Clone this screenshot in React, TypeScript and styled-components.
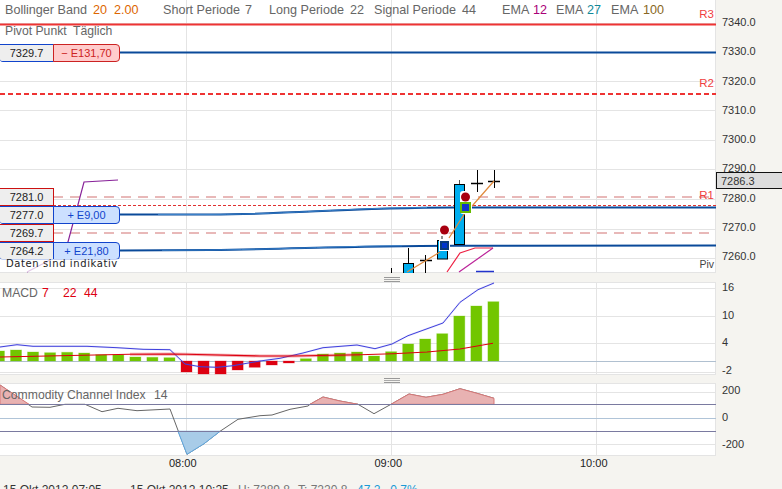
import styled, { createGlobalStyle } from 'styled-components';

const GlobalStyle = createGlobalStyle`
    html, body {
        margin: 0;
        padding: 0;
        background: #f5f4f0;
        overflow: hidden;
    }
`

const Page = styled.div`
    width: 782px;
    height: 489px;
    overflow: hidden;
    display: flex;
    flex-direction: column;
    background: #f5f4f0;
    font-family: "Liberation Sans", Arial, sans-serif;
    font-size: 11px;
    color: #333;
`

const PanelRow = styled.div<{ $height: number }>`
    display: flex;
    height: ${(p) => p.$height}px;
    flex: none;
`

const Plot = styled.div`
    position: relative;
    width: 716px;
    flex: none;
    background: #fff;

    svg {
        display: block;
    }
`

const Axis = styled.div<{ $top: number; $step: number }>`
    flex: 1;
    margin-top: ${(p) => p.$top}px;
    padding-left: 6px;
    display: grid;
    grid-auto-rows: ${(p) => p.$step}px;
    position: relative;
`

const Tick = styled.div`
    line-height: 14px;
    height: 14px;
    color: #333;
`

const CurrentPrice = styled.div`
    position: absolute;
    left: 0;
    right: 0;
    top: 157px;
    height: 17px;
    line-height: 16px;
    padding-left: 4px;
    box-sizing: border-box;
    background: #dddddd;
    border: 1px solid #111;
    border-right: none;
`

const Divider = styled.div<{ $height: number }>`
    height: ${(p) => p.$height}px;
    flex: none;
    width: 716px;
    display: flex;
    justify-content: center;
    align-items: flex-end;
    padding-left: 68px;
    box-sizing: border-box;
`

const Grip = styled.div`
    width: 16px;
    height: 3px;
    border-top: 1px solid #999;
    border-bottom: 1px solid #999;
    position: relative;

    &::after {
        content: '';
        position: absolute;
        left: 0;
        right: 0;
        top: 1px;
        height: 1px;
        background: #aaa;
    }
`

const Legend = styled.div`
    position: absolute;
    left: 5px;
    top: 2px;
    display: flex;
    font-size: 12.6px;
    line-height: 16px;
    white-space: nowrap;
    color: #666;
`

const LegendItem = styled.span<{ $width: number }>`
    width: ${(p) => p.$width}px;
    flex: none;
`

const LegendValue = styled.span<{ $color: string; $width?: number }>`
    color: ${(p) => p.$color};
    ${(p) => (p.$width ? `width: ${p.$width}px; flex: none;` : '')}
`

const PanelTitle = styled.div<{ $top: number; $left?: number }>`
    position: absolute;
    left: ${(p) => p.$left ?? 2}px;
    top: ${(p) => p.$top}px;
    display: flex;
    font-size: 12.2px;
    line-height: 16px;
    color: #666;
    white-space: pre;
`

const TitleValue = styled.span<{ $width: number; $color?: string }>`
    width: ${(p) => p.$width}px;
    flex: none;
    color: ${(p) => p.$color ?? 'inherit'};
`

const LevelName = styled.div<{ $top: number }>`
    position: absolute;
    right: 2px;
    top: ${(p) => p.$top}px;
    font-size: 11.5px;
    line-height: 14px;
    color: #f04040;
`

const PriceTag = styled.div<{ $top: number }>`
    position: absolute;
    left: 0;
    top: ${(p) => p.$top}px;
    height: 18px;
    display: flex;
`

const PriceCell = styled.div<{ $tone: 'blue' | 'red' }>`
    width: 54px;
    box-sizing: border-box;
    height: 100%;
    background: #eeeeee;
    border: 1px solid ${(p) => (p.$tone === 'blue' ? '#1144cc' : '#cc1111')};
    border-left: none;
    border-radius: ${(p) => (p.$tone === 'blue' ? '0 0 0 3px' : '0')};
    text-align: center;
    line-height: 16px;
    color: #222;
`

const AmountCell = styled.div<{ $tone: 'gain' | 'loss' }>`
    width: 67px;
    box-sizing: border-box;
    height: 100%;
    margin-left: -1px;
    background: ${(p) => (p.$tone === 'gain' ? '#cce0ff' : '#ffcccc')};
    border: 1px solid ${(p) => (p.$tone === 'gain' ? '#1144cc' : '#cc2222')};
    border-radius: 0 4px 4px 0;
    color: ${(p) => (p.$tone === 'gain' ? '#1144cc' : '#cc2222')};
    text-align: center;
    line-height: 16px;
`

const Notice = styled.div`
    position: absolute;
    left: 0;
    top: 259px;
    height: 13px;
    padding-left: 6px;
    width: 122px;
    box-sizing: border-box;
    background: rgba(255, 255, 255, 0.75);
    font-family: "DejaVu Sans", sans-serif;
    font-size: 10px;
    letter-spacing: 0.6px;
    line-height: 9px;
    color: #222;
`

const PivLabel = styled.div`
    position: absolute;
    right: 2px;
    top: 257px;
    font-size: 10.5px;
    line-height: 14px;
    color: #444;
`

const TimeRow = styled.div`
    display: flex;
    flex: none;
    height: 14px;
    padding-left: 80px;
`

const TimeLabel = styled.div`
    width: 205.5px;
    flex: none;
    text-align: center;
    line-height: 14px;
    color: #222;
`

const Footer = styled.div`
    display: flex;
    flex: none;
    margin-top: 13px;
    padding-left: 3px;
    font-size: 12px;
    line-height: 14px;
    white-space: pre;
    color: #333;
`

const FooterCell = styled.span<{ $width: number; $color?: string }>`
    width: ${(p) => p.$width}px;
    flex: none;
    color: ${(p) => p.$color ?? 'inherit'};
`

const GRID = '#e4e4e4';
const VERTICALS = [186.5, 391.5, 596.5];

const toPoints = (pts: number[][]) => pts.map((p) => p.join(',')).join(' ');

function Grid(props: { top: number; bottom: number; rows: number[] }) {
    return (
        <g stroke={GRID} strokeWidth={1} shapeRendering="crispEdges">
            {props.rows.map((y) => <line key={y} x1={0} x2={716} y1={y} y2={y} />)}
            {VERTICALS.map((x) => <line key={x} x1={x} x2={x} y1={props.top} y2={props.bottom} />)}
            <line x1={715.5} x2={715.5} y1={props.top} y2={props.bottom} />
        </g>
    )
}

function MainChart() {
    return (
        <svg width={716} height={273} viewBox="0 0 716 273">
            <Grid top={0} bottom={273} rows={[23, 81, 110, 140, 169, 199, 229, 258, 272]} />

            <line x1={0} x2={716} y1={24.5} y2={24.5} stroke="#ee3333" strokeWidth={2} />
            <line x1={120} x2={716} y1={52.5} y2={52.5} stroke="#0a4a9a" strokeWidth={2} />
            <line x1={0} x2={716} y1={94} y2={94} stroke="#ee3333" strokeWidth={2} strokeDasharray="5 3" />

            <line x1={53} x2={716} y1={197} y2={197} stroke="#e8b8b8" strokeWidth={2} strokeDasharray="10 7" />
            <line x1={53} x2={716} y1={233} y2={233} stroke="#e8b8b8" strokeWidth={2} strokeDasharray="10 7" />
            <line x1={53} x2={716} y1={205.5} y2={205.5} stroke="#e03030" strokeWidth={1} strokeDasharray="3 2" />

            <path d="M120 214.5 L210 214.5 C300 214 340 208 455 207.5 L716 207.5" fill="none" stroke="#0a4a9a" strokeWidth={2} />
            <path d="M158 214.5 L210 214.5 C300 214 340 208 427 207.6" fill="none" stroke="#3a80c8" strokeWidth={1} />
            <path d="M120 250.5 L210 250 C300 249 340 246 455 245.7 L716 245.5" fill="none" stroke="#0a4a9a" strokeWidth={2} />
            <path d="M162 250.3 L210 250 C300 249 340 246 402 245.8" fill="none" stroke="#3a80c8" strokeWidth={1} />

            <polyline points="27,272 50,260 68,242 84,182 118,180" fill="none" stroke="#882299" strokeWidth={1.2} />

            <polyline points="447,272 460,253 475,248 493,248" fill="none" stroke="#ee2244" strokeWidth={1.2} />
            <polyline points="459,272 493,248" fill="none" stroke="#bb2299" strokeWidth={1.2} />
            <line x1={476} x2={494} y1={271.5} y2={271.5} stroke="#2233cc" strokeWidth={1.5} />

            <line x1={391.5} x2={391.5} y1={268} y2={273} stroke="#000" />
            <line x1={408.5} x2={408.5} y1={248} y2={263} stroke="#000" />
            <rect x={403.5} y={263.5} width={10} height={10} fill="#00aeef" stroke="#000" />
            <line x1={425.5} x2={425.5} y1={255} y2={273} stroke="#000" />
            <line x1={420} x2={432} y1={260.5} y2={260.5} stroke="#000" strokeWidth={1.5} />
            <rect x={437.5} y={240.5} width={10} height={18.5} fill="#00aeef" stroke="#000" />
            <line x1={459.5} x2={459.5} y1={180} y2={184} stroke="#555" />
            <rect x={454.5} y={184.5} width={10} height={60} fill="#00aeef" stroke="#000" />
            <line x1={477.5} x2={477.5} y1={170} y2={192} stroke="#000" />
            <line x1={471} x2={483} y1={183.5} y2={183.5} stroke="#000" strokeWidth={1.5} />
            <line x1={494.5} x2={494.5} y1={170} y2={188} stroke="#000" />
            <line x1={488} x2={500} y1={181.5} y2={181.5} stroke="#000" strokeWidth={1.5} />

            <polyline points="407,272 440,252" fill="none" stroke="#e08a3c" strokeWidth={1.2} />
            <polyline points="449,238 465,213 473,205 494,181" fill="none" stroke="#e08a3c" strokeWidth={1.2} />

            <rect x={460} y={191} width={12} height={23} rx={3} fill="#fff" />
            <circle cx={465.5} cy={197} r={4.5} fill="#a80010" />
            <rect x={461} y={203} width={9} height={9} fill="#1133cc" stroke="#66bb00" strokeWidth={2} />
            <rect x={439} y={224} width={11} height={11} rx={5} fill="#fff" />
            <circle cx={444.5} cy={230} r={4.5} fill="#a80010" />
            <line x1={442} x2={442} y1={236} y2={239} stroke="#222" />
            <rect x={439} y={240} width={11} height={11} fill="#fff" />
            <rect x={441} y={242} width={7} height={7} fill="#0033cc" stroke="#0a3a7a" strokeWidth={2} />
        </svg>
    )
}

const BAR_EDGES = [
    351, 350, 352, 352.7, 352.3, 353, 354.7, 354.7, 357, 357.3, 357.7,
    372, 374, 374, 370, 367.3, 365, 363,
    358.7, 354, 353, 352, 356, 351.7, 344, 339, 333.7, 316, 306, 301.7,
];
const ZERO_Y = 361;

const MACD_LINE = [
    [0, 347], [17, 344.7], [33, 346.3], [87, 346.3], [117, 347.7], [143, 349.3], [170, 349.7],
    [185, 364], [200, 366.7], [217, 367.3], [233, 365.7], [260, 361], [280, 358.3], [303, 353],
    [323, 347.7], [357, 345], [375, 348.7], [392, 344], [408, 335.7], [443, 323], [460, 302.3],
    [478, 289.7], [494, 283],
];
const SIGNAL_LINE = [
    [0, 357], [130, 354.3], [170, 354], [186, 354.3], [260, 356], [293, 356], [360, 354.7], [393, 353.7],
    [427, 352], [460, 349], [493, 343.3],
];

function MacdChart() {
    return (
        <svg width={716} height={93} viewBox="0 282 716 93">
            <Grid top={282} bottom={375} rows={[282.5, 288, 316, 343, 372, 374]} />
            <line x1={0} x2={716} y1={361} y2={361} stroke="#b0c0d0" shapeRendering="crispEdges" />
            {BAR_EDGES.map((edge, i) => {
                const up = edge < ZERO_Y;
                return (
                    <rect
                        key={i}
                        x={10.5 + 17.05 * (i - 1)}
                        y={up ? edge : ZERO_Y}
                        width={11}
                        height={Math.abs(edge - ZERO_Y)}
                        fill={up ? '#72c600' : '#dd0011'}
                        stroke={up ? 'rgba(114,198,0,0.3)' : 'rgba(221,0,17,0.3)'}
                        strokeWidth={1}
                    />
                )
            })}
            <polyline points={toPoints(MACD_LINE)} fill="none" stroke="rgba(64,64,221,0.12)" strokeWidth={2} />
            <polyline points={toPoints(MACD_LINE)} fill="none" stroke="#4040dd" strokeWidth={1} />
            <polyline points={toPoints(SIGNAL_LINE.slice(1, 7))} fill="none" stroke="rgba(221,30,40,0.35)" strokeWidth={3} />
            <polyline points={toPoints(SIGNAL_LINE)} fill="none" stroke="#dd0011" strokeWidth={1.1} />
        </svg>
    )
}

const CCI_LINE = [
    [0, 385], [32, 407], [50, 407.3], [65, 404.3], [85, 404.3], [102, 411.7], [118, 408.3],
    [137, 410.7], [170, 409], [187, 454.3], [204, 443.7], [220, 431.3], [238, 419.3], [260, 415.7],
    [272, 415], [290, 409.3], [308, 406], [310, 404.3], [323, 397], [340, 401], [358, 404.3],
    [374, 413.7], [391, 404.3], [409, 394], [426, 397.3], [443, 394.3], [460, 388.7], [477, 393.3],
    [494, 398.3],
];

const CCI_UP_AREAS = [
    [[0, 385], [29, 404.3], [0, 404.3]],
    [[310, 404.3], [323, 397], [340, 401], [358, 404.3]],
    [[391, 404.3], [409, 394], [426, 397.3], [443, 394.3], [460, 388.7], [477, 393.3], [494, 398.3], [494, 404.3]],
];
const CCI_DOWN_AREA = [[178, 431.3], [187, 454.3], [204, 443.7], [220, 431.3]];

function CciChart() {
    return (
        <svg width={716} height={73} viewBox="0 383 716 73">
            <Grid top={383} bottom={456} rows={[383.5, 392, 444, 455]} />
            <line x1={0} x2={716} y1={418} y2={418} stroke="#b0c4d8" strokeWidth={1} shapeRendering="crispEdges" />
            <polyline points={toPoints(CCI_LINE)} fill="none" stroke="#666" strokeWidth={1} />
            {CCI_UP_AREAS.map((area, i) => (
                <polygon key={i} points={toPoints(area)} fill="#e8b2b2" stroke="#d87878" strokeWidth={1} />
            ))}
            <polygon points={toPoints(CCI_DOWN_AREA)} fill="#a8cce8" stroke="#60a8e0" strokeWidth={1} />
            <line x1={0} x2={716} y1={404.5} y2={404.5} stroke="#7a7aa0" shapeRendering="crispEdges" />
            <line x1={0} x2={716} y1={431.5} y2={431.5} stroke="#7a7aa0" shapeRendering="crispEdges" />
        </svg>
    )
}

export default function App() {
    return (
        <Page>
            <GlobalStyle />

            <PanelRow $height={273}>
                <Plot>
                    <MainChart />
                    <Legend>
                        <LegendItem $width={88}>Bollinger Band</LegendItem>
                        <LegendValue $color="#dd6600" $width={21}>20</LegendValue>
                        <LegendValue $color="#dd6600" $width={49}>2.00</LegendValue>
                        <LegendItem $width={82}>Short Periode</LegendItem>
                        <LegendValue $color="#666" $width={24}>7</LegendValue>
                        <LegendItem $width={81}>Long Periode</LegendItem>
                        <LegendValue $color="#666" $width={24}>22</LegendValue>
                        <LegendItem $width={88}>Signal Periode</LegendItem>
                        <LegendValue $color="#666" $width={40}>44</LegendValue>
                        <LegendItem $width={31}>EMA</LegendItem>
                        <LegendValue $color="#aa0077" $width={23}>12</LegendValue>
                        <LegendItem $width={31}>EMA</LegendItem>
                        <LegendValue $color="#118899" $width={24}>27</LegendValue>
                        <LegendItem $width={32}>EMA</LegendItem>
                        <LegendValue $color="#886622">100</LegendValue>
                    </Legend>
                    <PanelTitle $top={23} $left={5}>
                        <TitleValue $width={68}>Pivot Punkt</TitleValue>
                        <span>Täglich</span>
                    </PanelTitle>

                    <LevelName $top={7}>R3</LevelName>
                    <LevelName $top={76}>R2</LevelName>
                    <LevelName $top={188}>R1</LevelName>

                    <PriceTag $top={44}>
                        <PriceCell $tone="blue">7329.7</PriceCell>
                        <AmountCell $tone="loss">− E131,70</AmountCell>
                    </PriceTag>
                    <PriceTag $top={188}>
                        <PriceCell $tone="red">7281.0</PriceCell>
                    </PriceTag>
                    <PriceTag $top={206}>
                        <PriceCell $tone="blue">7277.0</PriceCell>
                        <AmountCell $tone="gain">+ E9,00</AmountCell>
                    </PriceTag>
                    <PriceTag $top={224}>
                        <PriceCell $tone="red">7269.7</PriceCell>
                    </PriceTag>
                    <PriceTag $top={242}>
                        <PriceCell $tone="blue">7264.2</PriceCell>
                        <AmountCell $tone="gain">+ E21,80</AmountCell>
                    </PriceTag>

                    <Notice>Daten sind indikativ</Notice>
                    <PivLabel>Piv</PivLabel>
                </Plot>
                <Axis $top={15} $step={29.3}>
                    {['7340.0', '7330.0', '7320.0', '7310.0', '7300.0', '7290.0', '7280.0', '7270.0', '7260.0'].map((t) => (
                        <Tick key={t}>{t}</Tick>
                    ))}
                    <CurrentPrice>7286.3</CurrentPrice>
                </Axis>
            </PanelRow>

            <Divider $height={9}><Grip /></Divider>

            <PanelRow $height={93}>
                <Plot>
                    <MacdChart />
                    <PanelTitle $top={3}>
                        <TitleValue $width={40}>MACD</TitleValue>
                        <TitleValue $width={21} $color="#dd0011">7</TitleValue>
                        <TitleValue $width={21} $color="#dd0011">22</TitleValue>
                        <TitleValue $width={21} $color="#dd0011">44</TitleValue>
                    </PanelTitle>
                </Plot>
                <Axis $top={-2} $step={27.7}>
                    {['16', '10', '4', '-2'].map((t) => <Tick key={t}>{t}</Tick>)}
                </Axis>
            </PanelRow>

            <Divider $height={8}><Grip /></Divider>

            <PanelRow $height={73}>
                <Plot>
                    <CciChart />
                    <PanelTitle $top={4}>
                        <TitleValue $width={152}>Commodity Channel Index</TitleValue>
                        <span>14</span>
                    </PanelTitle>
                </Plot>
                <Axis $top={0} $step={26.8}>
                    {['200', '0', '-200'].map((t) => <Tick key={t}>{t}</Tick>)}
                </Axis>
            </PanelRow>

            <TimeRow>
                <TimeLabel>08:00</TimeLabel>
                <TimeLabel>09:00</TimeLabel>
                <TimeLabel>10:00</TimeLabel>
            </TimeRow>

            <Footer>
                <FooterCell $width={127}>15 Okt 2012 07:05</FooterCell>
                <FooterCell $width={108}>15 Okt 2012 10:25</FooterCell>
                <FooterCell $width={60} $color="#777">H: 7289.8</FooterCell>
                <FooterCell $width={59} $color="#777">T: 7220.8</FooterCell>
                <FooterCell $width={80} $color="#1a9ad6">47.2   0.7%</FooterCell>
            </Footer>
        </Page>
    )
}
